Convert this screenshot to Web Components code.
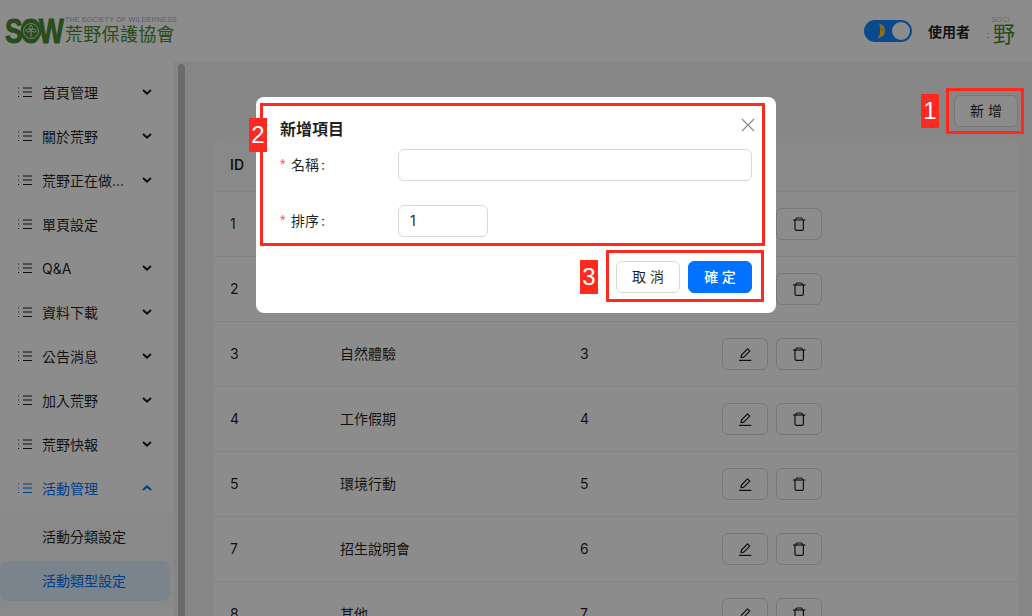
<!DOCTYPE html>
<html lang="zh-Hant">
<head>
<meta charset="utf-8">
<title>活動類型設定</title>
<style>
    html, body { margin: 0; height: 100%; overflow: hidden; }
    body {
        font-family: "Inter", "Noto Sans CJK TC", sans-serif;
        font-size: 14px;
        color: rgba(0, 0, 0, 0.88);
        background: #f5f5f5;
    }
</style>
</head>
<body>
<admin-page></admin-page>
<script>
const ICONS = {
    list: `<svg width="14" height="10" viewBox="0 0 14 10" fill="none" stroke="currentColor"><path d="M5 1h9M5 5h9M5 9.500h9" /><path d="M0 1h2M0 5h2M0 9.500h2" stroke-dasharray="1 1" /></svg>`,
    down: `<svg width="10" height="6" viewBox="0 0 10 6" fill="none" stroke="currentColor" stroke-width="2"><path d="M1 1l4 3.600L9 1" /></svg>`,
    up: `<svg width="10" height="6" viewBox="0 0 10 6" fill="none" stroke="currentColor" stroke-width="2"><path d="M1 5l4-3.600L9 5" /></svg>`,
    edit: `<svg width="14" height="14" viewBox="0 0 14 14" fill="none" stroke="currentColor" stroke-width="1.200"><path d="M1 13.400h12.400" /><path d="M3 10.700l.5-2.700 6-6.200 2.300 2.300-6 6.100z" stroke-linejoin="round" /></svg>`,
    trash: `<svg width="14" height="14" viewBox="0 0 14 14" fill="none" stroke="currentColor" stroke-width="1.200"><path d="M1 3h12.400" /><path d="M4 2.800c0-1.200.4-1.800 1.200-1.800h4c.8 0 1.200.6 1.200 1.800" /><path d="M3 3v8.800c0 1 .6 1.600 1.600 1.600h5.200c1 0 1.600-.6 1.600-1.600V3" /></svg>`,
    close: `<svg width="14" height="14" viewBox="0 0 14 14" fill="none" stroke="currentColor" stroke-width="1.200"><path d="M1 1l12 12M13 1L1 13" /></svg>`
};

class SiteHeader extends HTMLElement {
    constructor() {
        super();
        const shadow = this.attachShadow({ mode: "open" });
        shadow.innerHTML = `
            <style>
                :host {
                    display: flex;
                    align-items: center;
                    height: 62px;
                    flex: none;
                    padding: 0 15px 0 5px;
                    box-sizing: border-box;
                    background: #fff;
                }
                .logo { display: flex; align-items: center; gap: 2px; color: #4a8c30; }
                .sow { position: relative; flex: none; width: 58px; height: 30px; }
                .letters {
                    display: block;
                    font: 900 35px/30px "Liberation Sans", sans-serif;
                    letter-spacing: -3px;
                    -webkit-text-stroke: 1px #4a8c30;
                    white-space: nowrap;
                    transform: scaleX(0.76);
                    transform-origin: left center;
                }
                .sow svg { position: absolute; left: 14px; top: 3px; }
                .names { display: flex; flex-direction: column; }
                .en { font: 7px/8px "Liberation Sans", sans-serif; color: #aaa; letter-spacing: .22px; white-space: nowrap; }
                .zh { font: 18px/22px "Liberation Serif", "Noto Sans CJK TC", serif; letter-spacing: .3px; white-space: nowrap; }
                .right { margin-left: auto; display: flex; align-items: center; }
                .toggle {
                    display: flex;
                    align-items: center;
                    justify-content: space-between;
                    box-sizing: border-box;
                    width: 48px;
                    height: 22px;
                    padding: 0 2px 0 12px;
                    border-radius: 11px;
                    background: #1287ff;
                }
                .knob { width: 18px; height: 18px; border-radius: 50%; background: #fff; }
                .user { margin-left: 16px; font-weight: 600; }
                .avatar {
                    display: grid;
                    grid-template-columns: 6px 1fr;
                    justify-items: center;
                    width: 32px;
                    height: 30px;
                    margin-left: 15px;
                    overflow: hidden;
                    color: #4a8c30;
                }
                .avatar .top { grid-column: 1 / 3; font: 7px/8px "Liberation Sans", sans-serif; color: #bbb; letter-spacing: .5px; white-space: nowrap; }
                .avatar .dots { font: 9px/22px "Liberation Sans", sans-serif; }
                .avatar .big { font: 22px/22px "Liberation Serif", "Noto Sans CJK TC", serif; }
            </style>
            <div class="logo">
                <div class="sow">
                    <span class="letters">SOW</span>
                    <svg width="24" height="24" viewBox="0 0 24 24" fill="none" stroke="#eee" stroke-width="1"><circle cx="12" cy="12" r="10.500" fill="#4a8c30" stroke="none" /><circle cx="12" cy="12" r="7.500" stroke-width=".8" /><path d="M12 6c-1.800 1.400-1.800 3.800 0 5.500 1.800-1.700 1.800-4.100 0-5.500zM12 11.500C9.800 9.500 7.500 9.800 6.500 11.500c1 1.800 3.300 2 5.500 0zM12 11.500c2.200-2 4.500-1.700 5.500 0-1 1.800-3.300 2-5.500 0zM12 11.500V18" /></svg>
                </div>
                <div class="names">
                    <span class="en">THE SOCIETY OF WILDERNESS</span>
                    <span class="zh">荒野保護協會</span>
                </div>
            </div>
            <div class="right">
                <div class="toggle">
                    <svg width="10" height="16" viewBox="0 0 10 16"><path d="M3 0.500c4 .8 6 3.600 6 7.500s-3 6.800-8 7.500c2.400-2 3-4.600 3-7.500S4 2.500 3 .5z" fill="#f4c542" /><circle cx="6" cy="6" r=".7" fill="#8a6a10" /></svg>
                    <span class="knob"></span>
                </div>
                <span class="user">使用者</span>
                <div class="avatar">
                    <span class="top">SOCI</span>
                    <span class="dots">:</span>
                    <span class="big">野</span>
                </div>
            </div>
        `;
    }
}

class MenuItem extends HTMLElement {
    constructor() {
        super();
        const shadow = this.attachShadow({ mode: "open" });
        const open = this.hasAttribute("open");
        const chevron = this.hasAttribute("leaf") ? "" : (open ? ICONS.up : ICONS.down);
        shadow.innerHTML = `
            <style>
                :host {
                    display: flex;
                    align-items: center;
                    height: 44px;
                    padding: 0 22px 0 18px;
                    white-space: nowrap;
                }
                :host([open]) { color: #0072ff; }
                .icon { display: flex; margin-right: 10px; }
                .chev { display: flex; margin-left: auto; }
            </style>
            <span class="icon">${ICONS.list}</span>
            <slot></slot>
            <span class="chev">${chevron}</span>
        `;
    }
}

class SubMenuItem extends HTMLElement {
    constructor() {
        super();
        const shadow = this.attachShadow({ mode: "open" });
        shadow.innerHTML = `
            <style>
                :host {
                    display: flex;
                    align-items: center;
                    box-sizing: border-box;
                    height: 40px;
                    padding: 0 0 2px 42px;
                    border-radius: 8px;
                }
                :host([active]) { color: #0072ff; background: #e0efff; }
            </style>
            <slot></slot>
        `;
    }
}

class SideMenu extends HTMLElement {
    constructor() {
        super();
        const shadow = this.attachShadow({ mode: "open" });
        shadow.innerHTML = `
            <style>
                :host {
                    display: block;
                    flex: none;
                    width: 175px;
                    box-sizing: border-box;
                    padding-top: 8px;
                    background: #fff;
                    border-right: 1px solid #eee;
                    overflow: hidden;
                }
                .sub {
                    display: flex;
                    flex-direction: column;
                    gap: 4px;
                    margin-top: 2px;
                    padding: 5px 4px 8px 0;
                    background: #fafafa;
                }
            </style>
            <menu-item>首頁管理</menu-item>
            <menu-item>關於荒野</menu-item>
            <menu-item>荒野正在做...</menu-item>
            <menu-item leaf>單頁設定</menu-item>
            <menu-item>Q&amp;A</menu-item>
            <menu-item>資料下載</menu-item>
            <menu-item>公告消息</menu-item>
            <menu-item>加入荒野</menu-item>
            <menu-item>荒野快報</menu-item>
            <menu-item open>活動管理</menu-item>
            <div class="sub">
                <sub-menu-item>活動分類設定</sub-menu-item>
                <sub-menu-item active>活動類型設定</sub-menu-item>
            </div>
        `;
    }
}

class ScrollBar extends HTMLElement {
    constructor() {
        super();
        const shadow = this.attachShadow({ mode: "open" });
        shadow.innerHTML = `
            <style>
                :host {
                    display: block;
                    flex: none;
                    width: 13px;
                    box-sizing: border-box;
                    padding: 2px 2px 0 3px;
                    background: #f5f5f5;
                    border-right: 1px solid #eee;
                }
                .thumb { height: 100%; background: #c4c4c4; border-radius: 4px 4px 0 0; }
            </style>
            <div class="thumb"></div>
        `;
    }
}

class TextButton extends HTMLElement {
    constructor() {
        super();
        const shadow = this.attachShadow({ mode: "open" });
        shadow.innerHTML = `
            <style>
                :host {
                    display: inline-flex;
                    align-items: center;
                    justify-content: center;
                    box-sizing: border-box;
                    width: 64px;
                    height: 32px;
                    padding-bottom: 2px;
                    border: 1px solid #d9d9d9;
                    border-radius: 6px;
                    background: #fff;
                }
                :host([primary]) {
                    background: #0072ff;
                    border-color: #0072ff;
                    color: #fff;
                    font-weight: 500;
                }
            </style>
            <slot></slot>
        `;
    }
}

class IconButton extends HTMLElement {
    constructor() {
        super();
        const shadow = this.attachShadow({ mode: "open" });
        shadow.innerHTML = `
            <style>
                :host {
                    display: inline-flex;
                    align-items: center;
                    justify-content: center;
                    box-sizing: border-box;
                    width: 46px;
                    height: 32px;
                    border: 1px solid #d9d9d9;
                    border-radius: 6px;
                    background: #fff;
                }
            </style>
            ${ICONS[this.getAttribute("icon")]}
        `;
    }
}

class TableRow extends HTMLElement {
    constructor() {
        super();
        const shadow = this.attachShadow({ mode: "open" });
        shadow.innerHTML = `
            <style>
                :host {
                    display: grid;
                    grid-template-columns: 110px 240px 142px 1fr;
                    align-items: center;
                    height: 65px;
                    box-sizing: border-box;
                    padding-left: 16px;
                    border-bottom: 1px solid #f0f0f0;
                    background: #fff;
                }
                span { padding-bottom: 2px; }
                .actions { display: flex; gap: 8px; }
            </style>
            <span>${this.getAttribute("row-id")}</span>
            <span>${this.getAttribute("name") || ""}</span>
            <span>${this.getAttribute("sort") || ""}</span>
            <div class="actions">
                <icon-button icon="edit"></icon-button>
                <icon-button icon="trash"></icon-button>
            </div>
        `;
    }
}

class DataTable extends HTMLElement {
    constructor() {
        super();
        const shadow = this.attachShadow({ mode: "open" });
        shadow.innerHTML = `
            <style>
                :host { display: block; border-radius: 8px 8px 0 0; overflow: hidden; }
                .head {
                    display: flex;
                    align-items: center;
                    height: 54px;
                    padding-left: 16px;
                    font-weight: 600;
                    background: #fafafa;
                    border-bottom: 1px solid #f0f0f0;
                }
            </style>
            <div class="head">ID</div>
            <slot></slot>
        `;
    }
}

class ContentArea extends HTMLElement {
    constructor() {
        super();
        const shadow = this.attachShadow({ mode: "open" });
        shadow.innerHTML = `
            <style>
                :host {
                    display: block;
                    flex: 1;
                    min-width: 0;
                    box-sizing: border-box;
                    padding: 33px 14px 0 26px;
                    overflow: hidden;
                }
                .bar { display: flex; justify-content: flex-end; margin-bottom: 10px; }
            </style>
            <div class="bar"><text-button>新 增</text-button></div>
            <data-table>
                <table-row row-id="1"></table-row>
                <table-row row-id="2"></table-row>
                <table-row row-id="3" name="自然體驗" sort="3"></table-row>
                <table-row row-id="4" name="工作假期" sort="4"></table-row>
                <table-row row-id="5" name="環境行動" sort="5"></table-row>
                <table-row row-id="7" name="招生說明會" sort="6"></table-row>
                <table-row row-id="8" name="其他" sort="7"></table-row>
            </data-table>
        `;
    }
}

class FormField extends HTMLElement {
    constructor() {
        super();
        const shadow = this.attachShadow({ mode: "open" });
        const width = this.getAttribute("field-width") || "1fr";
        shadow.innerHTML = `
            <style>
                :host {
                    display: grid;
                    grid-template-columns: 118px ${width};
                    align-items: center;
                    height: 32px;
                }
                label { display: flex; align-items: center; padding-bottom: 2px; }
                .req { width: 11px; color: #ff4d4f; font-family: "Liberation Sans", sans-serif; }
                .colon { margin-left: 2px; }
                .input {
                    box-sizing: border-box;
                    height: 32px;
                    padding: 0 11px;
                    line-height: 30px;
                    border: 1px solid #d9d9d9;
                    border-radius: 6px;
                    background: #fff;
                }
            </style>
            <label><span class="req">*</span>${this.getAttribute("label")}<span class="colon">:</span></label>
            <div class="input">${this.getAttribute("value") || ""}</div>
        `;
    }
}

class AddModal extends HTMLElement {
    constructor() {
        super();
        const shadow = this.attachShadow({ mode: "open" });
        shadow.innerHTML = `
            <style>
                :host {
                    position: fixed;
                    inset: 0;
                    display: block;
                    background: rgba(0, 0, 0, 0.45);
                    z-index: 10;
                }
                .modal {
                    position: absolute;
                    left: 256px;
                    top: 97px;
                    width: 520px;
                    height: 216px;
                    box-sizing: border-box;
                    padding: 20px 24px;
                    border-radius: 8px;
                    background: #fff;
                }
                h3 { margin: 0 0 8px; font-size: 16px; line-height: 24px; font-weight: 600; }
                .close { position: absolute; right: 21px; top: 21px; display: flex; color: rgba(0, 0, 0, 0.45); }
                .fields { display: flex; flex-direction: column; gap: 24px; }
                .footer { display: flex; justify-content: flex-end; gap: 8px; margin-top: 24px; }
                .note { position: absolute; border: 3px solid #ff2a1f; box-sizing: border-box; }
                .tag {
                    position: absolute;
                    width: 18px;
                    height: 34px;
                    background: #ff2a1f;
                    color: #fff;
                    font: 24px/34px "Liberation Sans", sans-serif;
                    text-align: center;
                }
            </style>
            <div class="modal">
                <h3>新增項目</h3>
                <span class="close">${ICONS.close}</span>
                <div class="fields">
                    <form-field label="名稱"></form-field>
                    <form-field label="排序" value="1" field-width="90px"></form-field>
                </div>
                <div class="footer">
                    <text-button>取 消</text-button>
                    <text-button primary>確 定</text-button>
                </div>
            </div>
            <div class="note" style="left: 946px; top: 88px; width: 78px; height: 46px;"></div>
            <div class="tag" style="left: 921px; top: 94px;">1</div>
            <div class="note" style="left: 260px; top: 103px; width: 505px; height: 143px;"></div>
            <div class="tag" style="left: 249px; top: 118px;">2</div>
            <div class="note" style="left: 606px; top: 250px; width: 158px; height: 52px;"></div>
            <div class="tag" style="left: 580px; top: 260px;">3</div>
        `;
    }
}

class AdminPage extends HTMLElement {
    constructor() {
        super();
        const shadow = this.attachShadow({ mode: "open" });
        shadow.innerHTML = `
            <style>
                :host { display: flex; flex-direction: column; height: 616px; overflow: hidden; }
                .main { display: flex; flex: 1; min-height: 0; }
            </style>
            <site-header></site-header>
            <div class="main">
                <side-menu></side-menu>
                <scroll-bar></scroll-bar>
                <content-area></content-area>
            </div>
            <add-modal></add-modal>
        `;
    }
}

// children before parents, so nested elements upgrade while the parent builds
customElements.define("menu-item", MenuItem);
customElements.define("sub-menu-item", SubMenuItem);
customElements.define("text-button", TextButton);
customElements.define("icon-button", IconButton);
customElements.define("table-row", TableRow);
customElements.define("data-table", DataTable);
customElements.define("form-field", FormField);
customElements.define("site-header", SiteHeader);
customElements.define("side-menu", SideMenu);
customElements.define("scroll-bar", ScrollBar);
customElements.define("content-area", ContentArea);
customElements.define("add-modal", AddModal);
customElements.define("admin-page", AdminPage);
</script>
</body>
</html>
